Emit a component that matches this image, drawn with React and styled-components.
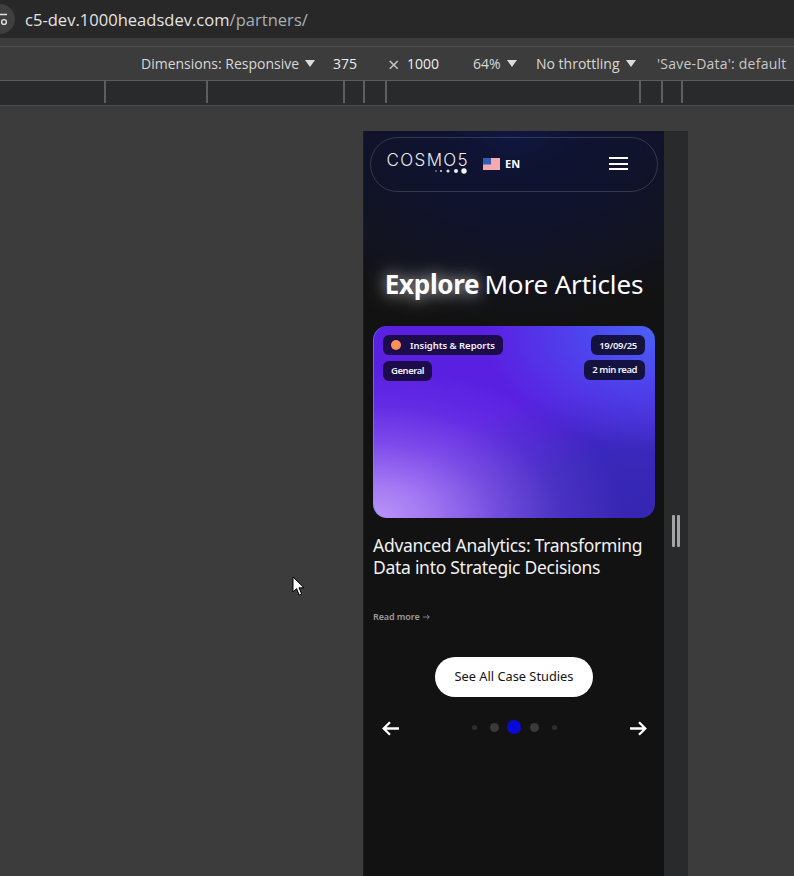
import React from "react";
import styled, { createGlobalStyle } from "styled-components";

const GlobalStyle = createGlobalStyle`
  html, body {
    margin: 0;
    padding: 0;
    background: #3c3c3c;
  }
  * {
    box-sizing: border-box;
  }
`;

const Screen = styled.div`
  position: relative;
  width: 794px;
  height: 876px;
  overflow: hidden;
  display: flex;
  flex-direction: column;
  background: #3c3c3c;
  font-family: "Open Sans", "Noto Sans", sans-serif;
`;

const AddressBar = styled.div`
  height: 38px;
  flex: none;
  display: flex;
  align-items: center;
  gap: 10px;
  background: #282828;
`;

const SiteIcon = styled.div`
  width: 30px;
  height: 30px;
  margin-left: -15px;
  flex: none;
  border-radius: 50%;
  background: #3f3f3f;
  display: flex;
  align-items: center;
  justify-content: flex-end;
  padding-right: 6px;
`;

const Url = styled.div`
  font-size: 16.5px;
  letter-spacing: 0.03px;
  color: #e3e3e3;
  white-space: nowrap;
  & span {
    color: #a9b0b5;
  }
`;

const ToolbarGap = styled.div`
  height: 9px;
  flex: none;
  border-bottom: 1px solid #4f4f4f;
`;

const Toolbar = styled.div`
  height: 34px;
  flex: none;
  display: grid;
  grid-template-columns: 192px 60px 14px 66px 63px 121px auto;
  align-items: center;
  padding-left: 141px;
  font-size: 14px;
  border-bottom: 1px solid #5c5c5c;
  white-space: nowrap;
`;

const ToolItem = styled.span`
  display: flex;
  align-items: center;
  gap: 6px;
  color: ${(p) => (p.$bright ? "#ececec" : p.$dim ? "#c8c8c8" : "#d8d8d8")};
  letter-spacing: ${(p) => (p.$dim ? 0.22 : 0)}px;
`;

const CloseMark = styled.span`
  font-size: 20px;
  line-height: 20px;
  margin: 3px 0 0 -5px;
  color: #c8c8c8;
`;

const Caret = styled.i`
  width: 0;
  height: 0;
  border-left: 5px solid transparent;
  border-right: 5px solid transparent;
  border-top: 7px solid #dcdcdc;
`;

const Ruler = styled.div`
  height: 25px;
  flex: none;
  display: flex;
  align-items: flex-start;
  background: #292a2c;
  border-bottom: 1px solid #4a4a4a;
`;

const Tick = styled.i`
  width: 2px;
  height: 22px;
  margin-left: ${(p) => p.$gap}px;
  flex: none;
  background: #5e5e5e;
`;

const Canvas = styled.div`
  flex: 1;
  min-height: 0;
  padding: 25px 0 0 363px;
  display: flex;
`;

const Device = styled.div`
  width: 325px;
  display: flex;
  border-left: 1px solid #1c1c1c;
`;

const Page = styled.div`
  width: 300px;
  flex: none;
  padding: 6px 6px 0;
  display: flex;
  flex-direction: column;
  font-family: "Noto Sans", sans-serif;
  color: #fff;
  background:
    radial-gradient(ellipse 280px 190px at 50% 0, #10163f 0, #0f1331 25%, #10132a 50%, #121420 75%, #121212 100%),
    #121212;
`;

const Gutter = styled.div`
  flex: 1;
  display: flex;
  align-items: center;
  justify-content: center;
  gap: 2px;
  background: #292a2c;
  padding-top: 55px;
`;

const GripBar = styled.i`
  width: 3px;
  height: 32px;
  border-radius: 1px;
  background: #a4a4a4;
`;

const Nav = styled.div`
  height: 55px;
  flex: none;
  display: flex;
  align-items: center;
  padding: 0 29px 0 15px;
  border: 1px solid rgba(255, 255, 255, 0.16);
  border-radius: 28px;
`;

const Logo = styled.div`
  width: 82px;
  flex: none;
  display: flex;
  flex-direction: column;
  align-items: flex-end;
  margin-top: -3px;
`;

const LogoText = styled.span`
  font-family: Inter, sans-serif;
  font-weight: 300;
  font-size: 17px;
  line-height: 16px;
  letter-spacing: 1.35px;
  margin-right: -1px;
  color: #eceded;
  white-space: nowrap;
`;

const Lang = styled.div`
  display: flex;
  align-items: center;
  gap: 5px;
  margin: -2px 0 0 15px;
  font-size: 11px;
  font-weight: 700;
`;

const Burger = styled.div`
  margin: -2px 0 0 auto;
  width: 19px;
  display: flex;
  flex-direction: column;
  gap: 3.7px;
  & i {
    height: 2px;
    background: #fff;
  }
`;

const Title = styled.h2`
  margin: 72px 0 0;
  height: 40px;
  flex: none;
  text-align: center;
  font-size: 26px;
  line-height: 40px;
  font-weight: 400;
  letter-spacing: -0.15px;
  white-space: nowrap;
  & b {
    font-weight: 700;
    letter-spacing: -0.3px;
    margin-right: -1.5px;
    text-shadow: 0 0 14px rgba(255, 255, 255, 0.55), 0 0 26px rgba(255, 255, 255, 0.45);
  }
`;

const Card = styled.div`
  margin: 22px 3px 0;
  height: 192px;
  flex: none;
  padding: 9px 10px;
  display: flex;
  justify-content: space-between;
  align-items: flex-start;
  border-radius: 14px;
  box-shadow: inset 1px 0 0 rgba(70, 170, 230, 0.6);
  background:
    radial-gradient(ellipse 250px 150px at 0 100%, #bb96f8 0, rgba(180, 140, 247, 0.82) 22%, rgba(160, 115, 242, 0.5) 50%, rgba(140, 90, 235, 0.2) 75%, rgba(120, 70, 230, 0) 100%),
    radial-gradient(ellipse 170px 125px at 100% 0, #4a62f7 0, rgba(74, 80, 240, 0.75) 45%, rgba(74, 80, 240, 0) 100%),
    radial-gradient(ellipse 250px 140px at 100% 100%, #3526b0 0, #3a28bb 50%, rgba(58, 40, 187, 0) 100%),
    #5a20e2;
`;

const TagColumn = styled.div`
  display: flex;
  flex-direction: column;
  gap: ${(p) => (p.$right ? 4.5 : 5.5)}px;
  align-items: ${(p) => (p.$right ? "flex-end" : "flex-start")};
`;

const Tag = styled.span`
  height: 20px;
  display: flex;
  align-items: center;
  gap: 9px;
  padding: 0 8px;
  border-radius: 6px;
  font-size: 9.5px;
  font-weight: 600;
  letter-spacing: ${(p) => p.$spacing}px;
  color: #f2f0fa;
  white-space: nowrap;
  background: ${(p) => (p.$right ? "#14133f" : "#1c0c4a")};
`;

const Dot = styled.i`
  width: 10px;
  height: 10px;
  border-radius: 50%;
  background: #ff8f58;
`;

const ArticleTitle = styled.h3`
  margin: 16px 3px 0;
  font-size: 17.5px;
  line-height: 22px;
  font-weight: 400;
  letter-spacing: -0.28px;
  color: #f1f1f1;
`;

const ReadMore = styled.a`
  margin: 32px 3px 0;
  display: flex;
  align-items: center;
  gap: 3px;
  font-size: 9px;
  line-height: 14px;
  font-weight: 600;
  color: #9a9a9a;
  letter-spacing: -0.1px;
`;

const CaseButton = styled.button`
  align-self: center;
  margin-top: 33px;
  padding: 0 0 2px;
  width: 158px;
  height: 40px;
  flex: none;
  border: 0;
  border-radius: 20px;
  background: #fff;
  color: #141414;
  font-family: "Noto Sans", sans-serif;
  font-size: 12.8px;
`;

const Pager = styled.div`
  margin-top: 20px;
  padding: 0 11px 0 12px;
  height: 22px;
  flex: none;
  display: flex;
  align-items: center;
  justify-content: space-between;
`;

const Dots = styled.div`
  display: grid;
  grid-template-columns: repeat(5, 20px);
  justify-items: center;
  align-items: center;
  margin: -2px 1px 0 0;
`;

const PagerDot = styled.i`
  width: ${(p) => p.$size}px;
  height: ${(p) => p.$size}px;
  border-radius: 50%;
  background: ${(p) => (p.$active ? "#0a0ad8" : p.$size < 6 ? "#2e2e2e" : "#3a3a3a")};
`;

const Cursor = styled.svg`
  position: absolute;
  left: 292px;
  top: 576px;
`;

function ArrowIcon({ flip }) {
  return (
    <svg width="17" height="15" viewBox="0 0 17 15" style={flip ? { transform: "scaleX(-1)" } : undefined}>
      <path d="M0 7.5h15M9 1.2l6.3 6.3L9 13.8" fill="none" stroke="#fff" strokeWidth="2.3" />
    </svg>
  );
}

function Flag() {
  return (
    <svg width="17" height="12" viewBox="0 0 17 12">
      <rect width="17" height="12" fill="#fbdfe2" />
      <path d="M0 1h17M0 3h17M0 5h17M0 7h17M0 9h17M0 11h17" stroke="#f0757c" strokeWidth="1" />
      <rect width="8" height="6.5" fill="#2f5cb4" />
    </svg>
  );
}

const ticks = [104, 102, 137, 20, 22, 254, 22, 20];

function App() {
  return (
    <Screen>
      <GlobalStyle />
      <AddressBar>
        <SiteIcon>
          <svg width="10" height="14" viewBox="0 0 10 14">
            <path d="M0 2.5h8" stroke="#e3e3e3" strokeWidth="1.5" />
            <circle cx="5" cy="10" r="2.4" fill="none" stroke="#e3e3e3" strokeWidth="1.4" />
          </svg>
        </SiteIcon>
        <Url>
          c5-dev.1000headsdev.com<span>/partners/</span>
        </Url>
      </AddressBar>
      <ToolbarGap />
      <Toolbar>
        <ToolItem>
          Dimensions: Responsive <Caret />
        </ToolItem>
        <ToolItem $bright>375</ToolItem>
        <ToolItem>
          <CloseMark>×</CloseMark>
        </ToolItem>
        <ToolItem $bright>1000</ToolItem>
        <ToolItem>
          64% <Caret />
        </ToolItem>
        <ToolItem>
          No throttling <Caret />
        </ToolItem>
        <ToolItem $dim>'Save-Data': default</ToolItem>
      </Toolbar>
      <Ruler>
        {ticks.map((gap, i) => (
          <Tick key={i} $gap={i === 0 ? gap : gap - 2} />
        ))}
      </Ruler>
      <Canvas>
        <Device>
          <Page>
            <Nav>
              <Logo>
                <LogoText>COSMO5</LogoText>
                <svg width="34" height="6" viewBox="0 0 34 6">
                  <circle cx="2" cy="3" r="0.7" fill="#ddd" />
                  <circle cx="7" cy="3" r="1" fill="#ddd" />
                  <circle cx="14" cy="3" r="1.5" fill="#e5e5e5" />
                  <circle cx="22" cy="3" r="2" fill="#eee" />
                  <circle cx="30" cy="3" r="2.7" fill="#f5f5f5" />
                </svg>
              </Logo>
              <Lang>
                <Flag />
                EN
              </Lang>
              <Burger>
                <i />
                <i />
                <i />
              </Burger>
            </Nav>
            <Title>
              <b>Explore</b> More Articles
            </Title>
            <Card>
              <TagColumn>
                <Tag $spacing={-0.04}>
                  <Dot />
                  Insights &amp; Reports
                </Tag>
                <Tag $spacing={-0.45}>General</Tag>
              </TagColumn>
              <TagColumn $right>
                <Tag $right $spacing={-0.3}>19/09/25</Tag>
                <Tag $right $spacing={-0.45}>2 min read</Tag>
              </TagColumn>
            </Card>
            <ArticleTitle>
              Advanced Analytics: Transforming Data into Strategic Decisions
            </ArticleTitle>
            <ReadMore>
              Read more
              <svg width="7" height="6" viewBox="0 0 7 6">
                <path d="M0 3h6.2M4 .8 6.3 3 4 5.2" fill="none" stroke="#9a9a9a" strokeWidth="0.8" />
              </svg>
            </ReadMore>
            <CaseButton>See All Case Studies</CaseButton>
            <Pager>
              <ArrowIcon flip />
              <Dots>
                <PagerDot $size={5} />
                <PagerDot $size={9} />
                <PagerDot $size={14} $active />
                <PagerDot $size={9} />
                <PagerDot $size={5} />
              </Dots>
              <ArrowIcon />
            </Pager>
          </Page>
          <Gutter>
            <GripBar />
            <GripBar />
          </Gutter>
        </Device>
      </Canvas>
      <Cursor width="13" height="21" viewBox="0 0 13 21">
        <path d="M1 1v15l3.6-3.4 2.6 6.4 2.4-1-2.6-6.2H12Z" fill="#fff" stroke="#000" strokeWidth="1" />
      </Cursor>
    </Screen>
  );
}

export default App;
